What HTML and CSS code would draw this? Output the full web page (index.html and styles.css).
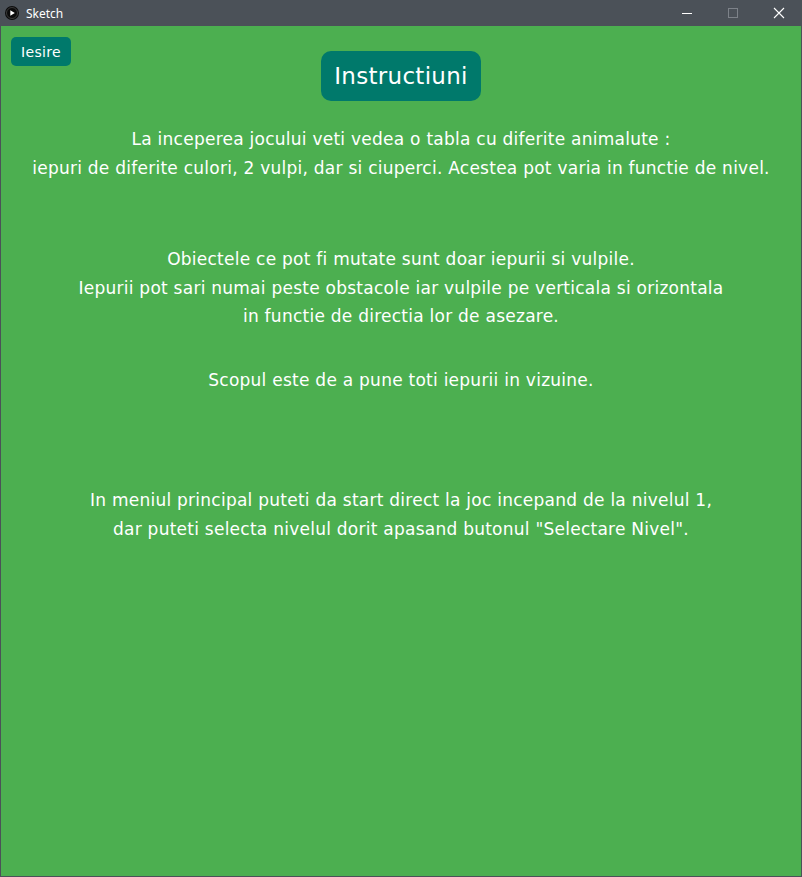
FILE: index.html
```html
<!DOCTYPE html>
<html lang="ro">
<head>
<meta charset="utf-8">
<title>Sketch</title>
<link rel="stylesheet" href="styles.css">
</head>
<body>
<div class="window">
  <div class="titlebar">
    <div class="app">
      <svg class="app-icon" width="14" height="14" viewBox="0 0 14 14"><circle cx="7" cy="7" r="7" fill="#0b0b0b"/><circle cx="7" cy="7" r="5.5" fill="none" stroke="#3a3a3a" stroke-width="1"/><path d="M5.3 4.2 L9.8 7 L5.3 9.8 Z" fill="#fff"/></svg>
      <span class="app-title">Sketch</span>
    </div>
    <div class="controls">
      <span class="ctl"><svg width="12" height="12" viewBox="0 0 12 12"><path d="M1 6.5 H11" stroke="#fff" stroke-width="1"/></svg></span>
      <span class="ctl"><svg width="12" height="12" viewBox="0 0 12 12"><rect x="1.5" y="1.5" width="9" height="9" fill="none" stroke="#7d8289" stroke-width="1"/></svg></span>
      <span class="ctl"><svg width="12" height="12" viewBox="0 0 12 12"><path d="M1 1 L11 11 M11 1 L1 11" stroke="#fff" stroke-width="1.1"/></svg></span>
    </div>
  </div>
  <main class="canvas">
    <header class="top">
      <button class="btn-exit">Iesire</button>
      <h1 class="btn-title">Instructiuni</h1>
      <span></span>
    </header>
    <p class="para p1">La inceperea jocului veti vedea o tabla cu diferite animalute :<br>iepuri de diferite culori, 2 vulpi, dar si ciuperci. Acestea pot varia in functie de nivel.</p>
    <p class="para p2">Obiectele ce pot fi mutate sunt doar iepurii si vulpile.<br>Iepurii pot sari numai peste obstacole iar vulpile pe verticala si orizontala<br>in functie de directia lor de asezare.</p>
    <p class="para p3">Scopul este de a pune toti iepurii in vizuine.</p>
    <p class="para p4">In meniul principal puteti da start direct la joc incepand de la nivelul 1,<br>dar puteti selecta nivelul dorit apasand butonul "Selectare Nivel".</p>
  </main>
</div>
</body>
</html>
```
FILE: styles.css
```css
html, body {
  margin: 0;
  padding: 0;
  width: 802px;
  height: 877px;
  overflow: hidden;
  background: #4b5158;
}
.window {
  width: 802px;
  height: 877px;
  display: flex;
  flex-direction: column;
  background: #4b5158;
}
.titlebar {
  height: 26px;
  flex: 0 0 26px;
  display: flex;
  align-items: center;
  justify-content: space-between;
  background: #4b5158;
  color: #fff;
}
.app {
  display: flex;
  align-items: center;
  padding-left: 5px;
  gap: 7px;
}
.app-icon { display: block; }
.app-title {
  font-family: "Noto Sans", "Open Sans", sans-serif;
  font-size: 12px;
  color: #fff;
}
.controls {
  display: flex;
  height: 26px;
}
.ctl {
  width: 46px;
  height: 26px;
  display: flex;
  align-items: center;
  justify-content: center;
}
.canvas {
  flex: 1;
  margin: 0 1px 1px 1px;
  background: #4caf50;
  color: #fff;
  font-family: "DejaVu Sans", sans-serif;
  text-align: center;
}
.top {
  display: grid;
  grid-template-columns: 1fr auto 1fr;
  align-items: start;
  height: 99px;
}
.btn-exit {
  justify-self: start;
  margin: 11px 0 0 10px;
  width: 60px;
  height: 29px;
  padding: 0;
  border: none;
  border-radius: 5px;
  background: #00796b;
  color: #fff;
  font-family: "DejaVu Sans", sans-serif;
  font-size: 14px;
  letter-spacing: 0.3px;
}
.btn-title {
  margin: 25px 0 0 0;
  width: 160px;
  height: 50px;
  line-height: 50px;
  border-radius: 10px;
  background: #00796b;
  color: #fff;
  font-family: "DejaVu Sans", sans-serif;
  font-weight: normal;
  font-size: 23px;
  letter-spacing: 0.3px;
}
.para {
  margin: 0;
  font-size: 17px;
  letter-spacing: 0.25px;
  line-height: 28.5px;
}
.p1 { margin-top: 0; }
.p2 { margin-top: 63px; }
.p3 { margin-top: 35.5px; }
.p4 { margin-top: 91.5px; }
```
